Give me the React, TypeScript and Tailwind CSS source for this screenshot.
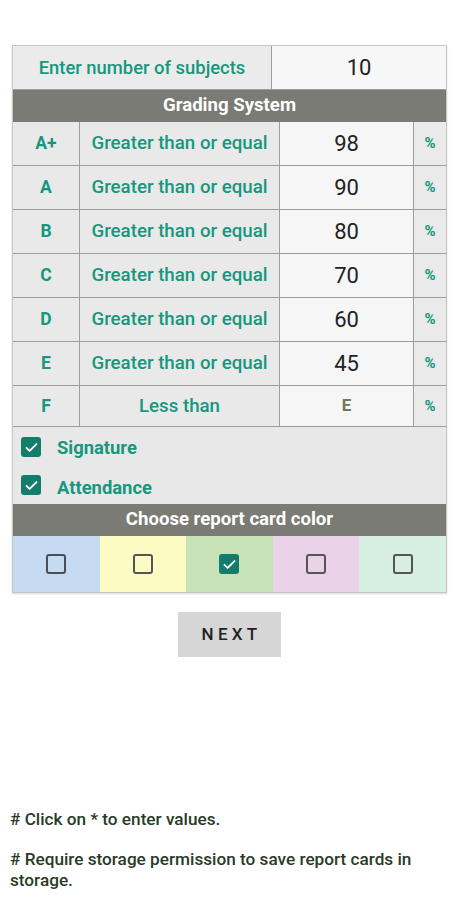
import React from "react";

const TEAL = "text-[#16977e]";

function Check({ checked, dark }: { checked: boolean; dark?: boolean }) {
  if (checked) {
    return (
      <div className="w-[20px] h-[20px] rounded-[3px] bg-[#137d6c] flex items-center justify-center shrink-0">
        <svg width="15" height="15" viewBox="0 0 24 24" fill="none" stroke="#ffffff" strokeWidth="3" strokeLinecap="round" strokeLinejoin="round">
          <path d="M4 12.5l5 5L20 6.5" />
        </svg>
      </div>
    );
  }
  return <div className={`w-[20px] h-[20px] rounded-[3px] border-2 ${dark ? "border-[#4a4f55]" : "border-[#555]"}`} />;
}

const grades = [
  { g: "A+", c: "Greater than or equal", v: "98" },
  { g: "A", c: "Greater than or equal", v: "90" },
  { g: "B", c: "Greater than or equal", v: "80" },
  { g: "C", c: "Greater than or equal", v: "70" },
  { g: "D", c: "Greater than or equal", v: "60" },
  { g: "E", c: "Greater than or equal", v: "45" },
];

export default function App() {
  return (
    <div className="w-[459px] h-[900px] bg-white relative" style={{ fontFamily: "Roboto, 'Noto Sans', sans-serif" }}>
      <div className="pt-[45px] px-[12px]">
        <div className="w-[435px] border border-[#c6c6c6] shadow-[0_1px_2px_rgba(0,0,0,0.15)]">
          {/* Row 1 */}
          <div className="flex h-[44px] border-b border-[#9d9d9d]">
            <div className={`w-[259px] bg-[#ebebeb] border-r border-[#9d9d9d] flex items-center justify-center text-[18.4px] font-medium ${TEAL}`}>
              Enter number of subjects
            </div>
            <div className="flex-1 bg-[#f7f7f7] flex items-center justify-center text-[22px] text-[#222]">10</div>
          </div>
          <div className="h-[32px] bg-[#7a7b74] flex items-center justify-center text-white text-[18.6px] font-bold">
            Grading System
          </div>
          {grades.map((r) => (
            <div key={r.g} className="flex h-[44px] border-b border-[#9d9d9d]">
              <div className={`w-[67px] bg-[#e9e9e9] border-r border-[#9d9d9d] flex items-center justify-center text-[17.5px] font-bold ${TEAL}`}>{r.g}</div>
              <div className={`w-[200px] bg-[#e9e9e9] border-r border-[#9d9d9d] flex items-center justify-center text-[18.7px] font-medium ${TEAL}`}>{r.c}</div>
              <div className="w-[134px] bg-[#f6f6f6] border-r border-[#9d9d9d] flex items-center justify-center text-[22px] text-[#222]">{r.v}</div>
              <div className={`flex-1 bg-[#eaeaea] flex items-center justify-center text-[15px] font-bold ${TEAL}`}>%</div>
            </div>
          ))}
          <div className="flex h-[41px] border-b border-[#9d9d9d]">
            <div className={`w-[67px] bg-[#e9e9e9] border-r border-[#9d9d9d] flex items-center justify-center text-[17.5px] font-bold ${TEAL}`}>F</div>
            <div className={`w-[200px] bg-[#e9e9e9] border-r border-[#9d9d9d] flex items-center justify-center text-[18.7px] font-medium ${TEAL}`}>Less than</div>
            <div className="w-[134px] bg-[#f6f6f6] border-r border-[#9d9d9d] flex items-center justify-center text-[17px] font-bold text-[#75765a]">E</div>
            <div className={`flex-1 bg-[#eaeaea] flex items-center justify-center text-[15px] font-bold ${TEAL}`}>%</div>
          </div>
          {/* checkboxes */}
          <div className="h-[77px] bg-[#e8e8e8] flex flex-col pl-[8px] pt-[10px] gap-[18px]">
            <div className="flex items-center gap-[16px] h-[20px]">
              <Check checked />
              <span className={`text-[18.4px] font-bold ${TEAL} relative top-[1px]`}>Signature</span>
            </div>
            <div className="flex items-center gap-[16px] h-[20px]">
              <Check checked />
              <span className={`text-[18.4px] font-bold ${TEAL} relative top-[3px]`}>Attendance</span>
            </div>
          </div>
          <div className="h-[32px] bg-[#7a7b74] flex items-center justify-center text-white text-[18.6px] font-bold">
            Choose report card color
          </div>
          <div className="grid grid-cols-5 h-[56px]">
            <div className="bg-[#c6dbf2] flex items-center justify-center"><Check checked={false} dark /></div>
            <div className="bg-[#fdfbc4] flex items-center justify-center"><Check checked={false} /></div>
            <div className="bg-[#c6e2b6] flex items-center justify-center"><Check checked /></div>
            <div className="bg-[#ead3e8] flex items-center justify-center"><Check checked={false} /></div>
            <div className="bg-[#d7eee2] flex items-center justify-center"><Check checked={false} /></div>
          </div>
        </div>
        <div className="flex justify-center mt-[19px]">
          <div className="w-[103px] h-[45px] bg-[#d6d6d6] flex items-center justify-center text-[17px] font-medium text-[#222] tracking-[0.25em] pl-[4px]">
            NEXT
          </div>
        </div>
      </div>
      <div className="absolute left-[10px] top-[809px] right-[10px] text-[17.2px] font-medium text-[#2b3a28] leading-[21px]">
        <p># Click on * to enter values.</p>
        <p className="mt-[19px]"># Require storage permission to save report cards in storage.</p>
      </div>
    </div>
  );
}
